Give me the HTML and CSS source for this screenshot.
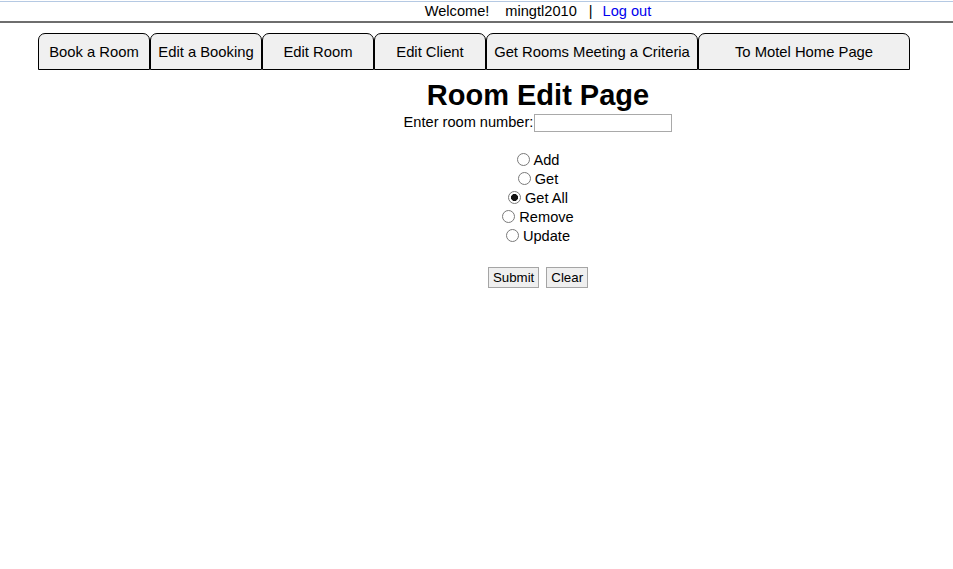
FILE: index.html
```html
<!DOCTYPE html>
<html>
<head>
<meta charset="utf-8">
<title>Room Edit Page</title>
<link rel="stylesheet" href="styles.css">
</head>
<body>
<div class="topbar">
  <div class="welcome"><span class="w1">Welcome!</span><span class="w2">mingtl2010</span><span class="sep">|</span><a class="logout" href="#">Log out</a></div>
</div>
<nav class="tabs">
  <a class="tab" href="#">Book a Room</a>
  <a class="tab" href="#">Edit a Booking</a>
  <a class="tab" href="#">Edit Room</a>
  <a class="tab" href="#">Edit Client</a>
  <a class="tab wide" href="#">Get Rooms Meeting a Criteria</a>
  <a class="tab wide" href="#">To Motel Home Page</a>
</nav>
<main class="content">
  <h1 class="title">Room Edit Page</h1>
  <div class="row">Enter room number:<input class="roomnum" type="text"></div>
  <div class="options">
    <label class="opt"><input type="radio" name="op" class="radio">Add</label>
    <label class="opt"><input type="radio" name="op" class="radio">Get</label>
    <label class="opt"><input type="radio" name="op" class="radio" checked>Get All</label>
    <label class="opt"><input type="radio" name="op" class="radio">Remove</label>
    <label class="opt"><input type="radio" name="op" class="radio">Update</label>
  </div>
  <div class="buttons"><button class="btn" type="button">Submit</button><button class="btn" type="button">Clear</button></div>
</main>
</body>
</html>
```
FILE: styles.css
```css
html, body {
  margin: 0;
  padding: 0;
  background: #ffffff;
}
body {
  font-family: "Liberation Sans", Arial, sans-serif;
  font-size: 14.6px;
  color: #000;
}
.topbar {
  margin-top: 1px;
  border-top: 1px solid #b5c9e3;
  border-bottom: 2px solid #6e6e6e;
  height: 19px;
}
.welcome {
  padding-left: 123px;
  text-align: center;
  line-height: 19px;
  font-size: 14.6px;
}
.w2 { margin-left: 16px; }
.sep { margin-left: 12px; margin-right: 10px; }
.logout { color: #0000ee; text-decoration: none; }

.tabs {
  display: flex;
  margin: 10px 0 0 38px;
}
.tab {
  box-sizing: border-box;
  width: 112px;
  height: 37px;
  border: 1px solid #000;
  border-radius: 7px 7px 0 0;
  background: #f0f0f0;
  color: #000;
  text-decoration: none;
  display: flex;
  align-items: center;
  justify-content: center;
  font-size: 14.8px;
  white-space: nowrap;
}
.tab.wide { width: 212px; }

.content {
  padding-left: 123px;
  text-align: center;
}
.title {
  margin: 9px 0 0;
  font-size: 29px;
  line-height: 33px;
  font-weight: bold;
}
.row {
  margin-top: 1px;
  line-height: 19px;
  height: 19px;
  display: flex;
  justify-content: center;
  align-items: center;
}
.roomnum {
  box-sizing: border-box;
  width: 138px;
  height: 18px;
  margin: 0 0 0 1px;
  border: 1px solid #a9a9a9;
  padding: 0 2px;
  font: inherit;
}
.options {
  margin-top: 19px;
  display: flex;
  flex-direction: column;
  align-items: center;
}
.opt {
  display: flex;
  align-items: center;
  height: 19px;
  line-height: 19px;
}
.radio {
  appearance: none;
  -webkit-appearance: none;
  box-sizing: border-box;
  width: 13px;
  height: 13px;
  margin: 0 4px 2px 0;
  border: 1px solid #7a7a7a;
  border-radius: 50%;
  background: #fff;
}
.radio:checked {
  background: radial-gradient(circle, #111 0, #111 3.2px, #fff 3.8px);
}
.buttons {
  margin-top: 21px;
  display: flex;
  justify-content: center;
  gap: 7px;
}
.btn {
  box-sizing: border-box;
  height: 21px;
  padding: 0 4px;
  font-family: "Liberation Sans", Arial, sans-serif;
  font-size: 13.3px;
  background: #efefef;
  border: 1px solid #a5a5a5;
  border-radius: 0;
  color: #000;
}
```
